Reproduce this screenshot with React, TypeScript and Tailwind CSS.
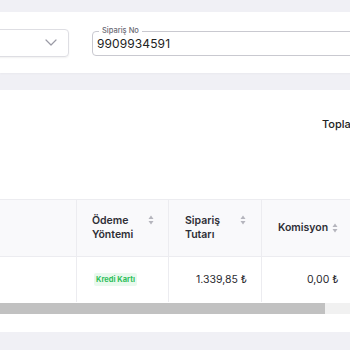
import React from "react";

function SortIcon() {
  return (
    <svg width="6" height="10" viewBox="0 0 6 10" className="shrink-0">
      <path d="M3 0.5 L5.5 4 L0.5 4 Z" fill="#b5b5bd" />
      <path d="M3 9.5 L5.5 6 L0.5 6 Z" fill="#b5b5bd" />
    </svg>
  );
}

export default function App() {
  return (
    <div
      className="w-[350px] h-[350px] overflow-hidden bg-[#f0f0f5] pt-[12px] antialiased"
      style={{ fontFamily: "Inter, 'Noto Sans', sans-serif" }}
    >
      {/* ── Filtreler ── */}
      <div className="bg-white h-[61px] w-[520px] flex items-center gap-[23px] shadow-[0_1px_2px_rgba(0,0,0,0.03)]">
        <div className="-ml-[60px] w-[129px] h-[28px] border border-[#dedee3] rounded-[4px] shadow-[0_1px_2px_rgba(0,0,0,0.06)] flex items-center justify-end pr-[11px] shrink-0">
          <svg width="12" height="7" viewBox="0 0 12 7" fill="none">
            <path d="M1 1 L6 6 L11 1" stroke="#9a9aa5" strokeWidth="1.2" strokeLinecap="round" strokeLinejoin="round" />
          </svg>
        </div>
        <div className="relative flex-1 h-[25px] border border-[#c9c9d0] rounded-[4px] mt-[1px] flex items-center pl-[4px]">
          <span className="absolute -top-[6px] left-[6px] bg-white px-[3px] text-[7.5px] leading-[10px] font-medium text-[#6b6b75]">
            Sipariş No
          </span>
          <span className="text-[12px] text-[#222] tracking-[0.1px] mt-[2px]">9909934591</span>
        </div>
      </div>

      <div className="h-[17px]" />

      {/* ── Tablo kartı ── */}
      <div className="bg-white">
        <div className="h-[109px] pt-[20px] pl-[322px] whitespace-nowrap">
          <span className="text-[11px] font-medium text-[#222]">Toplam</span>
        </div>

        <div className="grid grid-cols-[77px_92px_93px_120px] border-t border-[#ececf0]">
          {/* başlık */}
          <div className="h-[57px] bg-[#f9f9fb] border-r border-b border-[#ececf0]" />
          <div className="h-[57px] bg-[#f9f9fb] border-r border-b border-[#ececf0] flex items-center justify-between pl-[15px] pr-[14px]">
            <span className="text-[10.5px] leading-[14px] font-semibold text-[#2e2e36]">
              Ödeme
              <br />
              Yöntemi
            </span>
            <span className="self-start mt-[15px]">
              <SortIcon />
            </span>
          </div>
          <div className="h-[57px] bg-[#f9f9fb] border-r border-b border-[#ececf0] flex items-center justify-between pl-[16px] pr-[15px]">
            <span className="text-[10.5px] leading-[14px] font-semibold text-[#2e2e36]">
              Sipariş
              <br />
              Tutarı
            </span>
            <span className="self-start mt-[15px]">
              <SortIcon />
            </span>
          </div>
          <div className="h-[57px] bg-[#f9f9fb] border-b border-[#ececf0] flex items-center pl-[16px] gap-[4px]">
            <span className="text-[10.5px] font-semibold text-[#2e2e36]">Komisyon</span>
            <SortIcon />
          </div>

          {/* satır */}
          <div className="h-[45px] border-r border-[#ececf0]" />
          <div className="h-[45px] border-r border-[#ececf0] flex items-center pl-[17px]">
            <span className="bg-[#e9f9ee] text-[#2fbf5b] text-[7.5px] font-bold px-[2px] py-[1px] rounded-[2px]">
              Kredi Kartı
            </span>
          </div>
          <div className="h-[45px] border-r border-[#ececf0] flex items-center justify-end pr-[14px]">
            <span className="text-[10.5px] text-[#2a2a30]">1.339,85 ₺</span>
          </div>
          <div className="h-[45px] flex items-center pl-[45px]">
            <span className="text-[10.5px] text-[#2a2a30]">0,00 ₺</span>
          </div>
        </div>

        {/* yatay kaydırma çubuğu */}
        <div className="h-[11px] bg-[#f1f1f1] mt-[1px]">
          <div className="h-full w-[325px] bg-[#c1c1c1]" />
        </div>
        <div className="h-[18px]" />
      </div>
    </div>
  );
}
